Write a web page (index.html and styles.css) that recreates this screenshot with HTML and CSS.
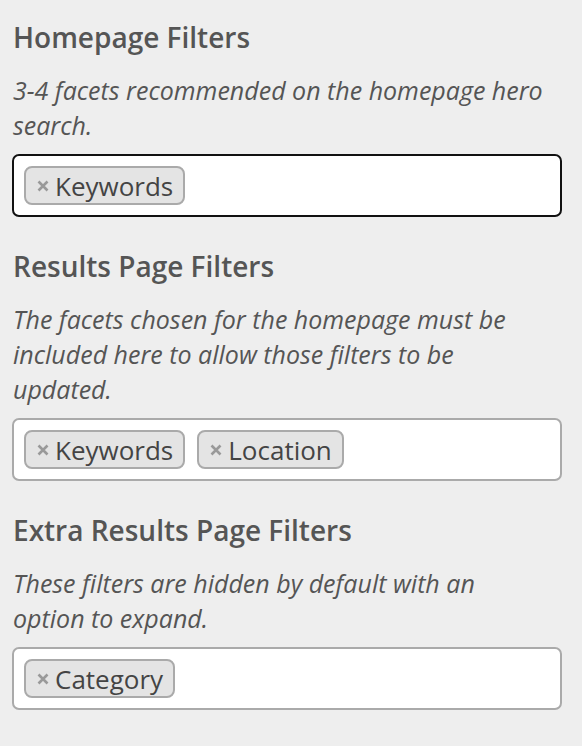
FILE: index.html
```html
<!DOCTYPE html>
<html lang="en">
<head>
  <meta charset="UTF-8" />
  <title>Facet Settings</title>
  <link rel="stylesheet" href="styles.css">
</head>
<body>
  <div class="settings">
    <div class="field">
      <h3>Homepage Filters</h3>
      <p class="desc">3-4 facets recommended on the homepage hero search.</p>
      <div class="select focused">
        <span class="tag"><svg class="remove" viewBox="0 0 12 12"><path d="M1.5 1.5L10.5 10.5M10.5 1.5L1.5 10.5"/></svg>Keywords</span>
      </div>
    </div>

    <div class="field">
      <h3>Results Page Filters</h3>
      <p class="desc">The facets chosen for the homepage must be included here to allow those filters to be updated.</p>
      <div class="select">
        <span class="tag"><svg class="remove" viewBox="0 0 12 12"><path d="M1.5 1.5L10.5 10.5M10.5 1.5L1.5 10.5"/></svg>Keywords</span>
        <span class="tag"><svg class="remove" viewBox="0 0 12 12"><path d="M1.5 1.5L10.5 10.5M10.5 1.5L1.5 10.5"/></svg>Location</span>
      </div>
    </div>

    <div class="field">
      <h3>Extra Results Page Filters</h3>
      <p class="desc">These filters are hidden by default with an option to expand.</p>
      <div class="select">
        <span class="tag"><svg class="remove" viewBox="0 0 12 12"><path d="M1.5 1.5L10.5 10.5M10.5 1.5L1.5 10.5"/></svg>Category</span>
      </div>
    </div>
  </div>
</body>
</html>
```

FILE: styles.css
```css
body {
  margin: 0;
  background: #eeeeee;
  font-family: "Open Sans", sans-serif;
  color: #555;
}
.settings {
  width: 550px;
  padding: 22px 0 0 12px;
}
.field {
  margin-bottom: 34px;
}
h3 {
  margin: 0 0 0 1px;
  font-size: 28px;
  font-weight: 600;
  line-height: 30px;
  color: #555;
}
.desc {
  max-width: 535px;
  margin: 21px 0 11px 1px;
  font-size: 25px;
  font-style: italic;
  line-height: 35px;
  color: #555;
}
.select {
  box-sizing: border-box;
  height: 63px;
  background: #fff;
  border: 2px solid #aaa;
  border-radius: 7px;
  padding: 10px;
  display: flex;
  gap: 12px;
  align-items: flex-start;
}
.select.focused {
  border-color: #111;
}
.tag {
  box-sizing: border-box;
  height: 39px;
  display: inline-flex;
  align-items: center;
  padding: 0 10px 0 11px;
  background: #e4e4e4;
  border: 2px solid #aaa;
  border-radius: 8px;
  font-size: 26px;
  color: #444;
}
.remove {
  width: 12px;
  height: 12px;
  margin-right: 6px;
  stroke: #999;
  stroke-width: 2.6;
  fill: none;
}
```
